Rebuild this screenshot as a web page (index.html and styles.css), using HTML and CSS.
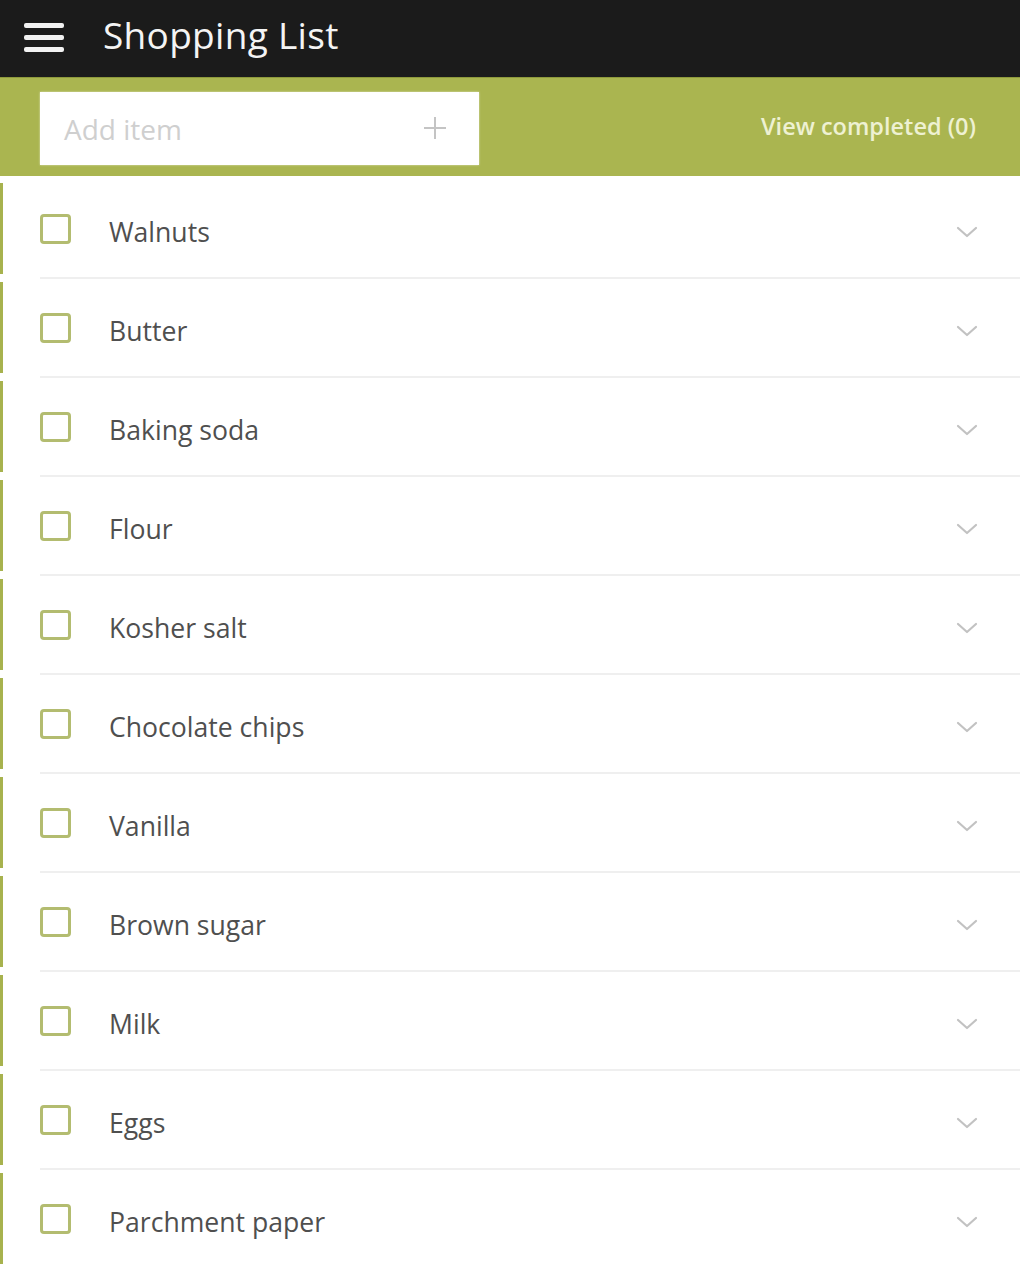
FILE: index.html
```html
<!DOCTYPE html>
<html>
<head>
<meta charset="utf-8">
<link rel="stylesheet" href="styles.css">
</head>
<body>
<header class="topbar">
  <div class="burger"><span></span><span></span><span></span></div>
  <h1 class="title">Shopping List</h1>
</header>
<div class="addbar">
  <div class="addbox">
    <span class="placeholder">Add item</span>
    <svg class="plus" width="24" height="24" viewBox="0 0 24 24"><path d="M12 1v22M1 12h22" stroke="#c4c4c4" stroke-width="2" fill="none"/></svg>
  </div>
  <div class="viewdone">View completed (0)</div>
</div>
<ul class="list">
  <li class="item"><div class="row"><span class="check"></span><span class="name">Walnuts</span><svg class="chev" width="22" height="12" viewBox="0 0 22 12"><path d="M2 2l9 8 9-8" stroke="#c2c2c2" stroke-width="2.2" fill="none" stroke-linecap="round" stroke-linejoin="round"/></svg></div><div class="sep"></div></li>
  <li class="item"><div class="row"><span class="check"></span><span class="name">Butter</span><svg class="chev" width="22" height="12" viewBox="0 0 22 12"><path d="M2 2l9 8 9-8" stroke="#c2c2c2" stroke-width="2.2" fill="none" stroke-linecap="round" stroke-linejoin="round"/></svg></div><div class="sep"></div></li>
  <li class="item"><div class="row"><span class="check"></span><span class="name">Baking soda</span><svg class="chev" width="22" height="12" viewBox="0 0 22 12"><path d="M2 2l9 8 9-8" stroke="#c2c2c2" stroke-width="2.2" fill="none" stroke-linecap="round" stroke-linejoin="round"/></svg></div><div class="sep"></div></li>
  <li class="item"><div class="row"><span class="check"></span><span class="name">Flour</span><svg class="chev" width="22" height="12" viewBox="0 0 22 12"><path d="M2 2l9 8 9-8" stroke="#c2c2c2" stroke-width="2.2" fill="none" stroke-linecap="round" stroke-linejoin="round"/></svg></div><div class="sep"></div></li>
  <li class="item"><div class="row"><span class="check"></span><span class="name">Kosher salt</span><svg class="chev" width="22" height="12" viewBox="0 0 22 12"><path d="M2 2l9 8 9-8" stroke="#c2c2c2" stroke-width="2.2" fill="none" stroke-linecap="round" stroke-linejoin="round"/></svg></div><div class="sep"></div></li>
  <li class="item"><div class="row"><span class="check"></span><span class="name">Chocolate chips</span><svg class="chev" width="22" height="12" viewBox="0 0 22 12"><path d="M2 2l9 8 9-8" stroke="#c2c2c2" stroke-width="2.2" fill="none" stroke-linecap="round" stroke-linejoin="round"/></svg></div><div class="sep"></div></li>
  <li class="item"><div class="row"><span class="check"></span><span class="name">Vanilla</span><svg class="chev" width="22" height="12" viewBox="0 0 22 12"><path d="M2 2l9 8 9-8" stroke="#c2c2c2" stroke-width="2.2" fill="none" stroke-linecap="round" stroke-linejoin="round"/></svg></div><div class="sep"></div></li>
  <li class="item"><div class="row"><span class="check"></span><span class="name">Brown sugar</span><svg class="chev" width="22" height="12" viewBox="0 0 22 12"><path d="M2 2l9 8 9-8" stroke="#c2c2c2" stroke-width="2.2" fill="none" stroke-linecap="round" stroke-linejoin="round"/></svg></div><div class="sep"></div></li>
  <li class="item"><div class="row"><span class="check"></span><span class="name">Milk</span><svg class="chev" width="22" height="12" viewBox="0 0 22 12"><path d="M2 2l9 8 9-8" stroke="#c2c2c2" stroke-width="2.2" fill="none" stroke-linecap="round" stroke-linejoin="round"/></svg></div><div class="sep"></div></li>
  <li class="item"><div class="row"><span class="check"></span><span class="name">Eggs</span><svg class="chev" width="22" height="12" viewBox="0 0 22 12"><path d="M2 2l9 8 9-8" stroke="#c2c2c2" stroke-width="2.2" fill="none" stroke-linecap="round" stroke-linejoin="round"/></svg></div><div class="sep"></div></li>
  <li class="item"><div class="row"><span class="check"></span><span class="name">Parchment paper</span><svg class="chev" width="22" height="12" viewBox="0 0 22 12"><path d="M2 2l9 8 9-8" stroke="#c2c2c2" stroke-width="2.2" fill="none" stroke-linecap="round" stroke-linejoin="round"/></svg></div><div class="sep"></div></li>
</ul>
</body>
</html>
```
FILE: styles.css
```css
* { box-sizing: border-box; }
html, body { margin: 0; padding: 0; }
body {
  width: 1020px;
  height: 1266px;
  overflow: hidden;
  background: #ffffff;
  font-family: "Open Sans", "Noto Sans", sans-serif;
}
.topbar {
  height: 77px;
  background: #1b1b1b;
  display: flex;
  align-items: center;
  padding-left: 24px;
}
.burger {
  width: 40px;
  display: flex;
  flex-direction: column;
  gap: 7px;
  margin-top: -3px;
}
.burger span {
  display: block;
  height: 5px;
  border-radius: 2px;
  background: #f2f2f2;
}
.title {
  margin: 0 0 0 39px;
  color: #f4f4f4;
  font-size: 37px;
  font-weight: 400;
  letter-spacing: 0.3px;
  margin-top: -8px;
}
.addbar {
  height: 99px;
  background: #aab550;
  border-top: 1px solid #8e9a3c;
  display: flex;
  align-items: center;
  justify-content: space-between;
  padding: 0 44px 0 40px;
}
.addbox {
  width: 439px;
  height: 73px;
  background: #ffffff;
  display: flex;
  align-items: center;
  justify-content: space-between;
  padding: 0 32px 0 24px;
  margin-top: 2px;
  box-shadow: 0 0 2px rgba(255,255,255,0.6);
}
.placeholder {
  color: #cfcfcf;
  font-size: 28px;
  margin-top: 2px;
}
.plus { margin-top: 0; }
.viewdone {
  color: #eef1d2;
  font-size: 23.5px;
  font-weight: 600;
  margin-top: -3px;
}
.list {
  list-style: none;
  margin: 0;
  padding: 7px 0 0 0;
}
.item { display: block; }
.row {
  height: 91px;
  border-left: 3px solid #a7b24e;
  display: flex;
  align-items: center;
  padding-left: 37px;
  padding-right: 42px;
}
.check {
  width: 31px;
  height: 30px;
  border: 3px solid #b3bc70;
  border-radius: 4px;
  flex: none;
}
.name {
  margin-left: 38px;
  flex: 1;
  color: #4f4f4f;
  font-size: 26.6px;
  margin-top: 7px;
}
.chev { flex: none; margin-top: 6px; }
.sep {
  height: 8px;
  margin-left: 40px;
  display: flex;
  align-items: center;
}
.sep::before {
  content: "";
  display: block;
  width: 100%;
  height: 2px;
  background: #efefef;
}
```
